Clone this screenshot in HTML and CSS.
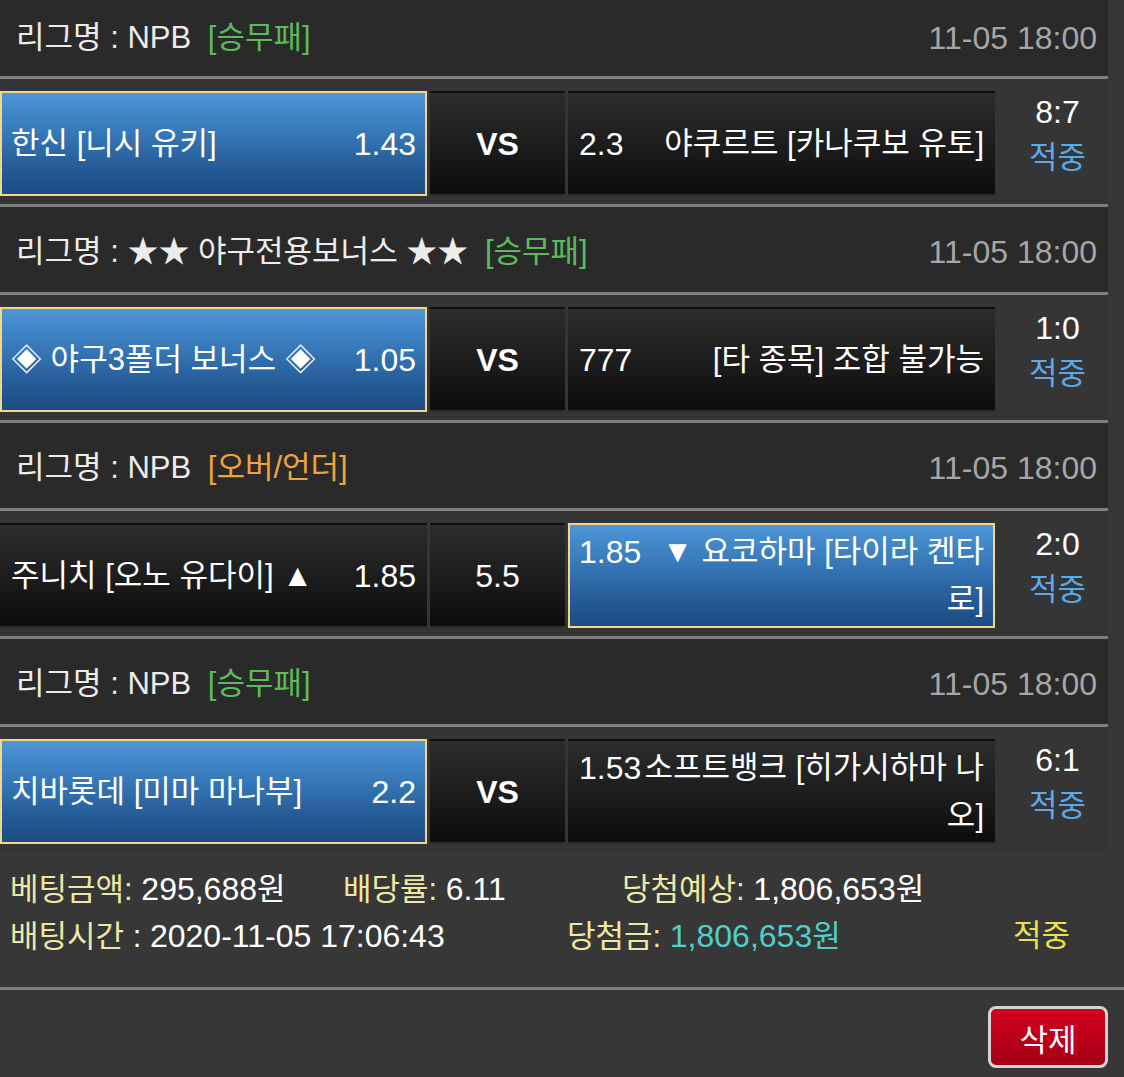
FILE: index.html
```html
<!DOCTYPE html>
<html lang="ko">
<head>
<meta charset="utf-8">
<title>배팅내역</title>
<link rel="stylesheet" href="styles.css">
</head>
<body>
<div class="bets">
  <div class="league first">
    <div class="league-name">리그명 : NPB <span class="tag green">[승무패]</span></div>
    <div class="time num">11-05 18:00</div>
  </div>
  <div class="match">
    <div class="cell home pick"><div class="inner"><span class="odds num">1.43</span>한신 [니시 유키]</div></div>
    <div class="cell mid vs">VS</div>
    <div class="cell away"><div class="inner"><span class="odds num">2.3</span>야쿠르트 [카나쿠보 유토]</div></div>
    <div class="result"><div class="score num">8:7</div><div class="hit">적중</div></div>
  </div>

  <div class="league">
    <div class="league-name">리그명 : ★★ 야구전용보너스 ★★ <span class="tag green">[승무패]</span></div>
    <div class="time num">11-05 18:00</div>
  </div>
  <div class="match">
    <div class="cell home pick"><div class="inner"><span class="odds num">1.05</span>◈ 야구3폴더 보너스 ◈</div></div>
    <div class="cell mid vs">VS</div>
    <div class="cell away"><div class="inner"><span class="odds num">777</span>[타 종목] 조합 불가능</div></div>
    <div class="result"><div class="score num">1:0</div><div class="hit">적중</div></div>
  </div>

  <div class="league">
    <div class="league-name">리그명 : NPB <span class="tag orange">[오버/언더]</span></div>
    <div class="time num">11-05 18:00</div>
  </div>
  <div class="match">
    <div class="cell home"><div class="inner"><span class="odds num">1.85</span>주니치 [오노 유다이] ▲</div></div>
    <div class="cell mid">5.5</div>
    <div class="cell away pick"><div class="inner"><span class="odds num">1.85</span>▼ 요코하마 [타이라 켄타로]</div></div>
    <div class="result"><div class="score num">2:0</div><div class="hit">적중</div></div>
  </div>

  <div class="league">
    <div class="league-name">리그명 : NPB <span class="tag green">[승무패]</span></div>
    <div class="time num">11-05 18:00</div>
  </div>
  <div class="match last">
    <div class="cell home pick"><div class="inner"><span class="odds num">2.2</span>치바롯데 [미마 마나부]</div></div>
    <div class="cell mid vs">VS</div>
    <div class="cell away"><div class="inner"><span class="odds num">1.53</span>소프트뱅크 [히가시하마 나오]</div></div>
    <div class="result"><div class="score num">6:1</div><div class="hit">적중</div></div>
  </div>
</div>

<div class="summary">
  <div class="sum-line line-a">
    <div class="c1"><span class="lbl">베팅금액:</span> <span class="num">295,688</span>원</div>
    <div class="c2"><span class="lbl">배당률:</span> <span class="num">6.11</span></div>
    <div class="c3"><span class="lbl">당첨예상:</span> <span class="num">1,806,653</span>원</div>
  </div>
  <div class="sum-line line-b">
    <div class="c1"><span class="lbl">배팅시간</span> : <span class="num">2020-11-05 17:06:43</span></div>
    <div class="c2"><span class="lbl">당첨금:</span> <span class="win"><span class="num">1,806,653</span>원</span></div>
    <div class="c3 status">적중</div>
  </div>
</div>

<div class="actions">
  <button class="btn-del" type="button">삭제</button>
</div>
</body>
</html>
```

FILE: styles.css
```css
* {
  box-sizing: border-box;
}

html, body {
  margin: 0;
  padding: 0;
}

body {
  width: 1124px;
  height: 1077px;
  overflow: hidden;
  background: #373737;
  color: #ffffff;
  font-family: "Liberation Sans", "Noto Sans CJK KR", sans-serif;
  font-size: 31px;
}

.num {
  font-size: 32px;
}

.bets {
  width: 1108px;
}

.league {
  height: 88px;
  padding: 5px 11px 0 16px;
  background: #2a2a2a;
  border-bottom: 3px solid #7f7f7f;
  display: flex;
  align-items: center;
  justify-content: space-between;
  color: #ececec;
  line-height: 40px;
  white-space: nowrap;
}

.league.first {
  height: 79px;
  padding-top: 0;
}

.tag {
  margin-left: 8px;
}

.green {
  color: #5dba5b;
}

.orange {
  color: #f2a23c;
}

.time {
  color: #a6a6a6;
}

.match {
  display: flex;
  height: 128px;
  padding: 12px 0 8px;
  background: #353535;
  border-bottom: 3px solid #7f7f7f;
}

.match.last {
  height: 125px;
  border-bottom: none;
}

.cell {
  height: 105px;
  border: 2px solid transparent;
  padding: 0 9px;
  display: flex;
  align-items: center;
  background: linear-gradient(#2c2c2c, #1a1a1a 60%, #0c0c0c);
  line-height: 48px;
}

.cell.pick {
  background: linear-gradient(#4e96d7, #3373b3 45%, #245b95 75%, #1b4c82);
  border-color: #f2d68c;
}

.home {
  width: 427px;
  margin-right: 3px;
}

.mid {
  width: 135px;
  margin-right: 3px;
  justify-content: center;
  font-size: 32px;
}

.vs {
  font-weight: bold;
}

.away {
  width: 427px;
}

.inner {
  width: 100%;
}

.home .odds {
  float: right;
}

.away .inner {
  text-align: right;
}

.away .odds {
  float: left;
}

.result {
  width: 113px;
  padding-left: 12px;
  text-align: center;
  line-height: 45px;
  margin-top: -1px;
}

.hit {
  color: #5ba9e6;
}

.summary {
  padding: 14px 0 27px 10px;
  border-bottom: 3px solid #7f7f7f;
  line-height: 46px;
  white-space: nowrap;
}

.sum-line {
  display: flex;
}

.line-a .c1 {
  width: 333px;
}

.line-a .c2 {
  width: 279px;
}

.line-b .c1 {
  width: 557px;
}

.line-b .c2 {
  width: 446px;
}

.lbl {
  color: #efe7a6;
}

.win {
  color: #4fcfc9;
}

.status {
  color: #e9e14d;
}

.actions {
  display: flex;
  justify-content: flex-end;
  padding: 16px 16px 0 0;
}

.btn-del {
  width: 120px;
  height: 62px;
  border: 3px solid #d4d4d4;
  border-radius: 8px;
  background: linear-gradient(#d2021f, #b80019 60%, #a30015);
  color: #ffffff;
  font-family: "Liberation Sans", "Noto Sans CJK KR", sans-serif;
  font-size: 31px;
  display: flex;
  align-items: center;
  justify-content: center;
  padding: 0;
}
```
